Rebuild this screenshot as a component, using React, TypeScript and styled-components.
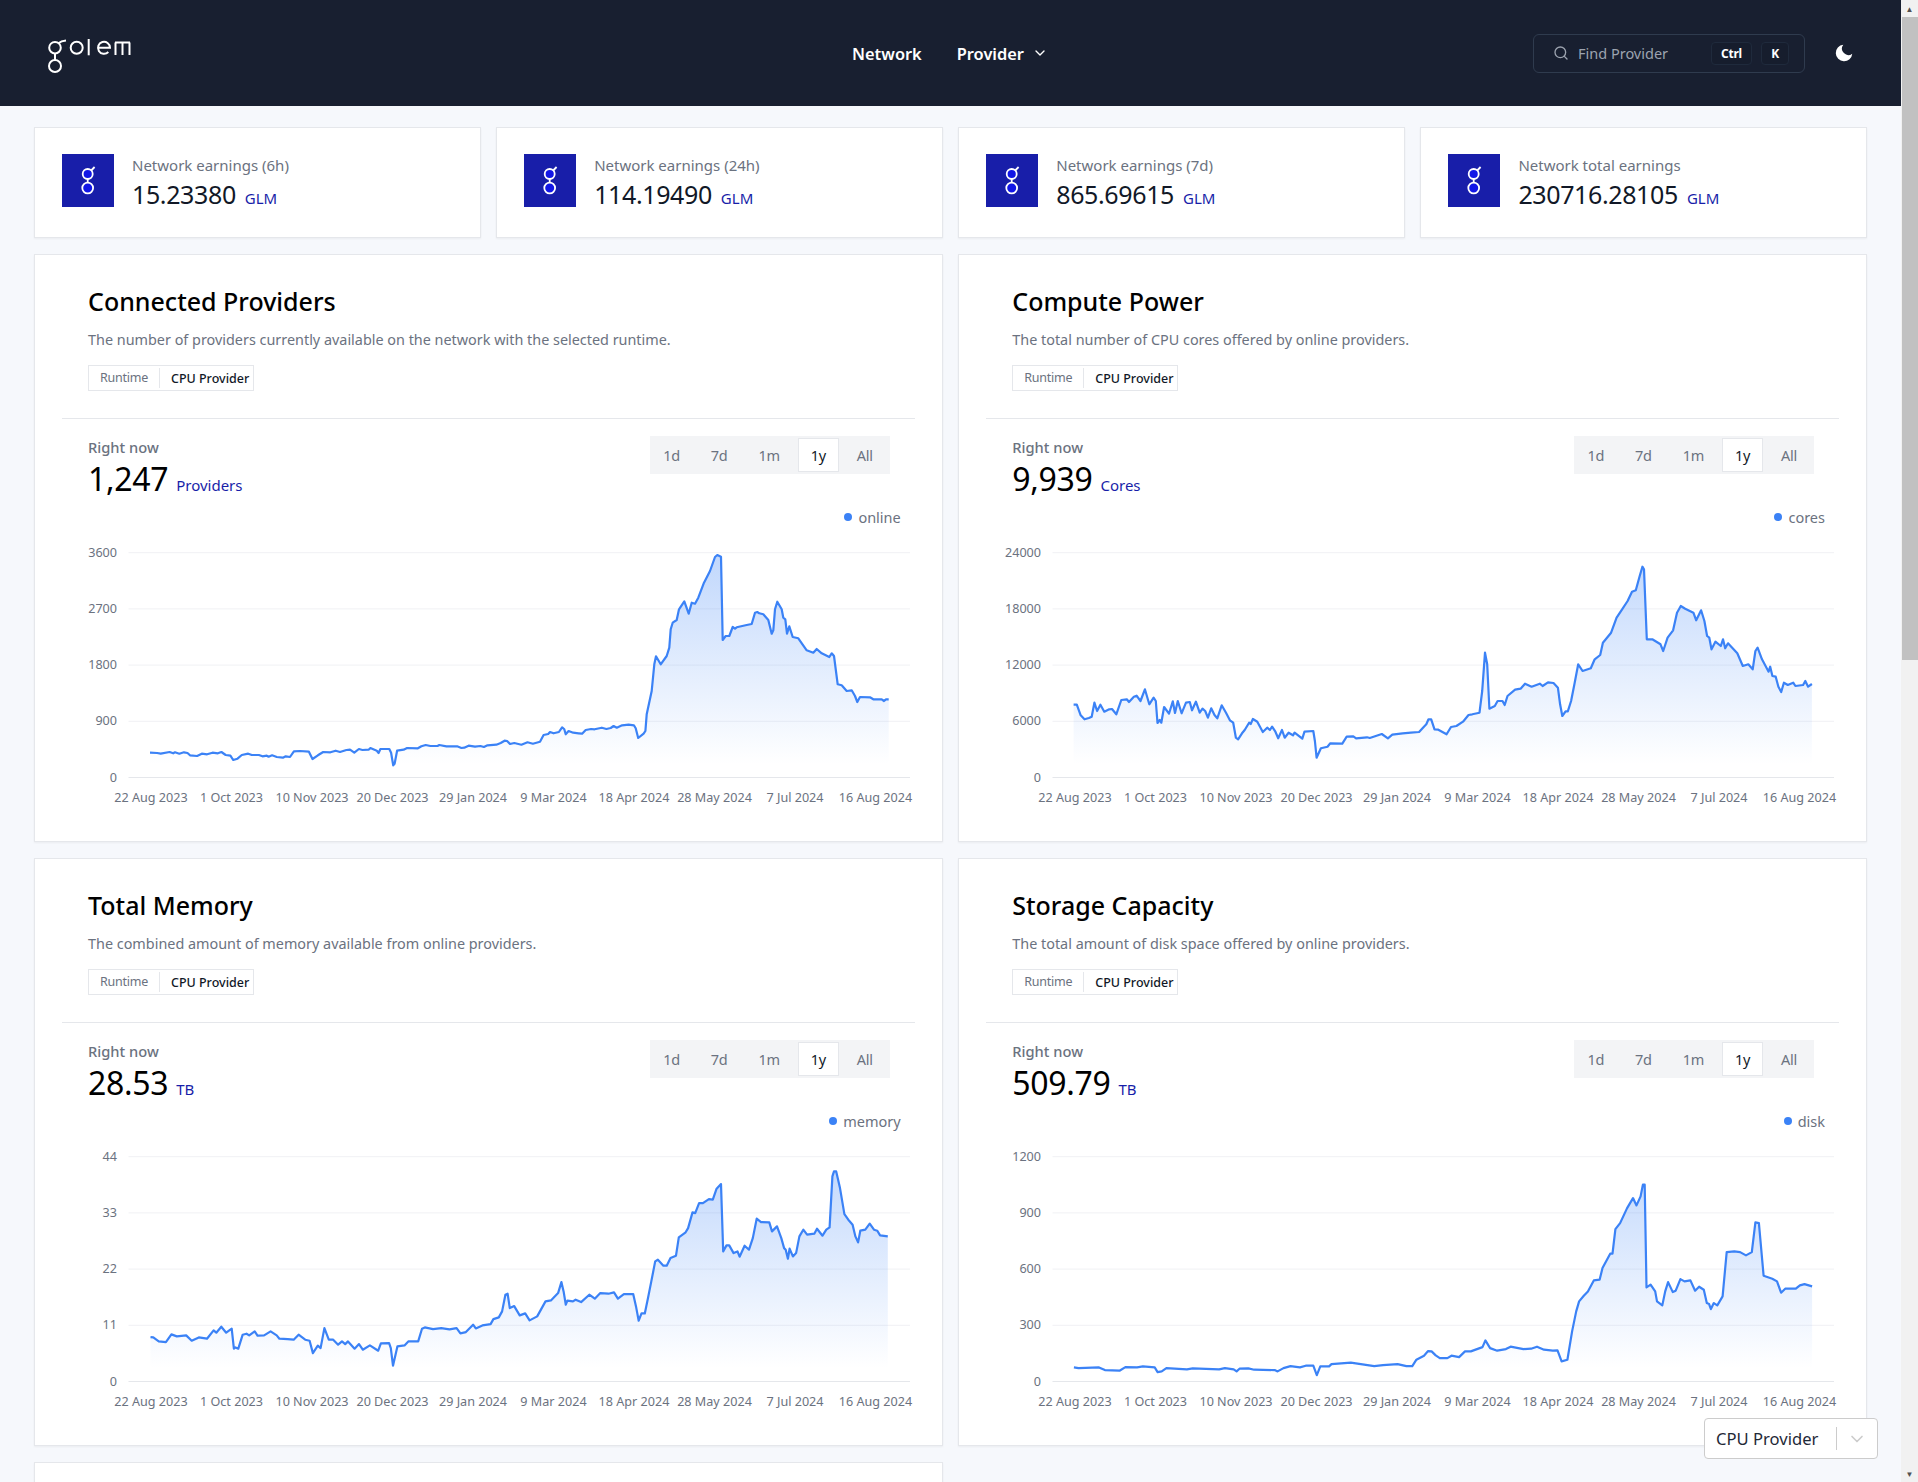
import { useMemo } from "react";
import styled, { createGlobalStyle } from "styled-components";
import { ChevronDown, Search } from "lucide-react";

const GOLEM_BLUE = "#181ea9";
const FONT = `"Noto Sans", "Open Sans", Arial, sans-serif`;

const GlobalStyle = createGlobalStyle`
  html, body {
    margin: 0;
    height: 100%;
    overflow: hidden;
  }
  body {
    font-family: ${FONT};
    background: #f6f8fc;
    color: #111827;
  }
  * { box-sizing: border-box; }
`;

/* ---- page frame ---- */

const Shell = styled.div`
  display: flex;
  height: 1482px;
  position: relative;
`;

const Viewport = styled.div`
  flex: 1;
  min-width: 0;
  overflow: hidden;
`;

const FakeScrollbar = styled.div`
  width: 17px;
  display: flex;
  flex-direction: column;
  background: #f1f1f1;
  color: #505050;
  font-size: 8px;
  line-height: 17px;
  text-align: center;
`;

const ScrollArrow = styled.div`
  height: 17px;
  flex: none;
`;

const ScrollThumb = styled.div`
  height: 643px;
  margin-left: 1px;
  background: #c1c1c1;
`;

const ScrollRest = styled.div`
  flex: 1;
`;

/* ---- header ---- */

const Header = styled.header`
  height: 106px;
  background: #181f30;
  display: grid;
  grid-template-columns: 1fr auto 1fr;
  align-items: center;
  padding: 0 46px 0 48px;
`;

const LogoSvg = styled.svg`
  display: block;
  margin-top: 8px;
`;

const Nav = styled.nav`
  display: flex;
  align-items: center;
  gap: 35px;
  margin-left: -3px;
`;

const NavLink = styled.a`
  display: flex;
  align-items: center;
  gap: 8px;
  color: #fff;
  font-size: 16.4px;
  font-weight: 600;
`;

const HeaderRight = styled.div`
  display: flex;
  align-items: center;
  justify-content: flex-end;
  gap: 28px;
`;

const SearchBox = styled.div`
  width: 272px;
  height: 39px;
  display: flex;
  align-items: center;
  border: 1px solid #2f3b4e;
  border-radius: 6px;
  padding: 0 15px 0 19px;
  color: #9ca3af;
  font-size: 14.5px;
`;

const SearchLabel = styled.span`
  margin-left: 9px;
  flex: 1;
`;

const Key = styled.kbd`
  height: 23px;
  display: inline-flex;
  align-items: center;
  justify-content: center;
  min-width: ${(p: { $w: number }) => p.$w}px;
  margin-left: 9px;
  border: 1px solid #1f2a3c;
  border-radius: 4px;
  background: #161d2d;
  color: #fff;
  font-family: ${FONT};
  font-size: 12px;
  font-weight: 700;
  letter-spacing: -0.02em;
`;

const MoonSvg = styled.svg`
  display: block;
  fill: #fff;
`;

/* ---- content ---- */

const Content = styled.main`
  padding: 21px 34px 0;
  display: flex;
  flex-direction: column;
  gap: 16px;
`;

const StatRow = styled.section`
  display: grid;
  grid-template-columns: repeat(4, minmax(0, 1fr));
  gap: 15.5px;
`;

const StatCard = styled.div`
  height: 111px;
  display: flex;
  align-items: center;
  gap: 18px;
  padding: 0 27px;
  background: #fff;
  border: 1px solid #e5e7eb;
  box-shadow: 0 1px 2px rgba(0, 0, 0, 0.05);
`;

const StatIcon = styled.div`
  width: 52px;
  height: 53px;
  flex: none;
  margin-top: -4px;
  display: flex;
  align-items: center;
  justify-content: center;
  background: ${GOLEM_BLUE};
`;

const StatText = styled.div`
  padding-top: 3px;
`;

const StatLabel = styled.div`
  font-size: 15px;
  line-height: 20px;
  color: #6b7280;
`;

const StatValue = styled.div`
  display: flex;
  align-items: baseline;
  gap: 9px;
  margin-top: 3px;
  font-size: 25px;
  line-height: 32px;
  letter-spacing: -0.015em;
  color: #111827;
`;

const Unit = styled.span`
  font-size: 15px;
  letter-spacing: 0;
  color: ${GOLEM_BLUE};
`;

const ChartGrid = styled.section`
  display: grid;
  grid-template-columns: repeat(2, minmax(0, 1fr));
  column-gap: 15.5px;
  row-gap: 16px;
`;

const Card = styled.article`
  min-height: 588px;
  padding: 0 27px;
  background: #fff;
  border: 1px solid #e5e7eb;
  box-shadow: 0 1px 2px rgba(0, 0, 0, 0.05);
`;

const CardHead = styled.div`
  padding: 30px 26px 27px;
  border-bottom: 1px solid #e5e7eb;
`;

const CardTitle = styled.h2`
  margin: 0;
  font-size: 25px;
  line-height: 32px;
  font-weight: 500;
  color: #000;
`;

const CardText = styled.p`
  margin: 13px 0 0;
  font-size: 14.4px;
  line-height: 20px;
  color: #6b7280;
`;

const Tag = styled.div`
  display: inline-flex;
  align-items: center;
  height: 26px;
  margin-top: 15px;
  padding: 0 4px 0 11px;
  border: 1px solid #e5e7eb;
  font-size: 12.5px;
`;

const TagKey = styled.span`
  color: #6b7280;
  padding-right: 11px;
  margin-right: 11px;
  line-height: 20px;
  letter-spacing: -0.02em;
  border-right: 1px solid #e5e7eb;
`;

const TagValue = styled.span`
  color: #111827;
  font-weight: 500;
`;

const ChartTop = styled.div`
  display: flex;
  justify-content: space-between;
  align-items: flex-start;
  padding: 17px 25px 0 26px;
  height: 79px;
`;

const NowLabel = styled.div`
  margin-top: 1px;
  font-size: 14.7px;
  line-height: 20px;
  font-weight: 500;
  color: #6b7280;
`;

const NowValue = styled.div`
  display: flex;
  align-items: baseline;
  gap: 8px;
  margin-top: 3px;
  font-size: 32px;
  line-height: 38px;
  letter-spacing: -0.01em;
  color: #000;
`;

const Toggle = styled.div`
  display: flex;
  gap: 7px;
  padding: 3px 5px 3px 1px;
  height: 38px;
  background: #f3f4f6;
`;

const ToggleItem = styled.span<{ $active?: boolean }>`
  display: flex;
  align-items: center;
  padding: 0 12px;
  font-size: 14.5px;
  letter-spacing: -0.02em;
  color: ${(p) => (p.$active ? "#111827" : "#6b7280")};
  background: ${(p) => (p.$active ? "#fff" : "transparent")};
  box-shadow: ${(p) => (p.$active ? "0 0 0 1px #e5e7eb" : "none")};
`;

const Legend = styled.div`
  display: flex;
  justify-content: flex-end;
  align-items: center;
  gap: 6px;
  height: 20px;
  margin-top: 9px;
  padding-right: 14px;
  font-size: 14.5px;
  color: #6b7280;
`;

const LegendDot = styled.i`
  width: 8px;
  height: 8px;
  border-radius: 50%;
  background: #3b82f6;
`;

const ChartSvg = styled.svg`
  display: block;
  margin-top: 4px;
  font-family: ${FONT};
  font-size: 12.6px;
  fill: #6b7280;
`;

const RuntimeSelect = styled.div`
  position: absolute;
  right: 40px;
  bottom: 23px;
  width: 174px;
  height: 41px;
  display: flex;
  align-items: center;
  background: #fff;
  border: 1px solid #ccc;
  border-radius: 4px;
  font-size: 16.6px;
  color: #1f2937;
`;

const SelectText = styled.span`
  flex: 1;
  padding-left: 11px;
`;

const SelectArrow = styled.span`
  display: flex;
  align-items: center;
  justify-content: center;
  width: 41px;
  height: 23px;
  border-left: 1px solid #ccc;
  color: #ccc;
`;

/* ---- chart data, traced by hand from the 1y view ---- */

type Pt = [number, number];

// each trace is given in its own sampling grid: x / sx + ox, y / 3 + oy
const conn1: Pt[] = [[140,665],[160,666],[170,668],[195,663],[205,667],[210,664],[222,668],[235,664],[245,666],[252,673],[272,675],[285,668],[300,670],[315,665],[330,667],[340,663],[352,672],[365,674],[373,687],[385,683],[397,672],[415,668],[425,672],[445,672],[455,676],[467,674],[472,677],[482,673],[495,678],[512,680],[520,676],[532,678],[543,661],[560,660],[585,662],[595,684],[610,673],[625,663],[645,664],[660,659],[672,663],[690,657],[700,656],[712,665],[725,654],[735,657],[752,656],[757,651],[775,659],[780,666],[785,654],[810,654],[815,665],[821,703],[825,698],[832,659],[850,656],[860,651],[890,652],[900,646],[912,642],[925,645],[945,645],[950,642],[970,646],[1000,646],[1012,651],[1020,650],[1032,644],[1050,647],[1065,645],[1075,648],[1085,643],[1110,641],[1122,636],[1133,629],[1140,630],[1148,639],[1160,636],[1180,641],[1197,634],[1212,638],[1232,632],[1242,612],[1255,609],[1260,603],[1270,607],[1285,603],[1294,589],[1300,595],[1304,610],[1312,600],[1325,605],[1340,607],[1350,608],[1360,597],[1375,594],[1385,595],[1405,590],[1418,594],[1430,591],[1438,585],[1447,590],[1462,583],[1480,581],[1495,583],[1500,592],[1507,621],[1522,608],[1527,600]];
const conn2: Pt[] = [[440,880],[455,810],[463,730],[468,706],[482,730],[500,705],[508,680],[512,625],[518,605],[530,597],[537,565],[553,541],[566,578],[575,545],[585,548],[595,530],[612,485],[630,450],[645,408],[652,402],[663,407],[668,657],[677,645],[688,645],[698,618],[705,623],[710,619],[740,612],[755,609],[765,575],[772,573],[778,577],[790,580],[805,597],[815,638],[820,628],[825,565],[832,542],[845,565],[850,590],[856,595],[861,638],[868,616],[878,648],[895,652],[920,688],[940,695],[950,684],[965,697],[988,708],[995,697],[1002,705],[1013,790],[1025,793],[1040,810],[1055,808],[1065,825],[1072,843],[1080,828],[1110,829],[1120,835],[1145,835],[1152,840],[1158,835],[1166,835]];
const cores: Pt[] = [[135,551],[141,551],[148,583],[155,595],[163,591],[168,587],[173,545],[178,570],[184,551],[191,572],[200,565],[205,564],[213,580],[222,537],[232,535],[236,543],[245,527],[250,524],[257,540],[265,505],[273,550],[281,530],[285,540],[288,606],[292,597],[295,605],[300,558],[309,578],[316,541],[320,576],[325,540],[332,577],[340,545],[347,543],[351,568],[358,542],[365,575],[370,563],[375,570],[380,590],[386,562],[392,582],[397,592],[405,553],[413,575],[420,598],[426,605],[431,650],[435,655],[442,637],[447,627],[455,605],[458,609],[462,594],[470,602],[480,633],[488,620],[493,627],[497,617],[503,632],[508,652],[515,627],[520,650],[527,635],[535,643],[538,635],[552,653],[556,632],[572,630],[575,660],[578,710],[586,682],[598,677],[603,667],[625,668],[633,647],[645,646],[650,652],[670,649],[675,651],[697,639],[708,652],[716,641],[735,637],[750,635],[765,633],[772,620],[778,610],[782,595],[787,595],[793,625],[800,626],[815,640],[823,618],[833,615],[845,602],[855,582],[862,580],[875,575],[880,510],[885,395],[889,430],[893,563],[903,555],[908,540],[917,540],[921,552],[926,525],[940,506],[950,503],[958,488],[970,497],[985,488],[990,495],[1000,484],[1010,486],[1018,500],[1022,550],[1026,585],[1032,571],[1036,571],[1042,540],[1048,490],[1055,430],[1063,450],[1078,442],[1085,415],[1095,402],[1100,365],[1115,335],[1125,290],[1135,265],[1145,240],[1153,212],[1160,208],[1167,165],[1172,137],[1175,145],[1180,355],[1190,355],[1205,370],[1210,390],[1218,350],[1228,328],[1235,275],[1242,255],[1250,263],[1265,275],[1270,298],[1279,268],[1285,300],[1290,345],[1294,350],[1298,385],[1305,362],[1315,375],[1319,355],[1323,382],[1328,367],[1345,397],[1355,435],[1365,430],[1373,445],[1378,390],[1382,380],[1390,415],[1402,452],[1405,437],[1409,465],[1415,467],[1420,497],[1425,513],[1430,485],[1437,492],[1447,485],[1451,495],[1465,492],[1469,480],[1474,497],[1481,489]];
const memory: Pt[] = [[165,617],[170,618],[180,630],[193,632],[203,609],[213,615],[230,612],[240,628],[253,618],[268,622],[280,597],[285,604],[294,586],[303,604],[313,592],[317,652],[320,648],[325,652],[333,610],[340,607],[345,612],[355,600],[360,613],[372,612],[384,600],[395,612],[400,622],[415,623],[426,625],[435,610],[447,625],[455,628],[461,665],[470,643],[475,650],[482,590],[490,625],[498,625],[507,640],[514,630],[520,638],[525,630],[537,652],[545,638],[552,655],[565,642],[580,658],[585,636],[600,635],[603,650],[607,703],[615,645],[628,642],[635,630],[653,630],[660,592],[665,588],[680,593],[695,590],[710,594],[723,590],[730,606],[740,602],[753,580],[758,591],[770,582],[785,578],[790,563],[800,558],[806,540],[812,490],[816,487],[820,530],[828,524],[838,552],[848,546],[856,567],[870,555],[885,510],[895,507],[908,485],[914,452],[918,480],[922,520],[925,508],[935,510],[940,505],[950,512],[965,490],[975,502],[985,485],[1000,487],[1010,483],[1017,502],[1028,488],[1045,488],[1050,525],[1055,568],[1060,546],[1066,546],[1072,500],[1078,450],[1085,390],[1090,385],[1100,403],[1106,403],[1113,380],[1123,373],[1128,318],[1140,304],[1145,290],[1153,243],[1158,245],[1165,215],[1172,215],[1183,203],[1190,205],[1197,172],[1205,158],[1209,360],[1215,342],[1220,342],[1228,365],[1235,360],[1239,376],[1248,343],[1256,355],[1263,320],[1270,262],[1278,272],[1293,273],[1298,300],[1307,285],[1315,320],[1320,350],[1323,355],[1327,382],[1330,352],[1336,375],[1342,365],[1348,315],[1355,295],[1362,310],[1375,307],[1380,292],[1390,313],[1397,295],[1403,288],[1408,135],[1411,120],[1415,120],[1422,170],[1430,248],[1437,265],[1445,280],[1450,315],[1455,333],[1459,298],[1468,295],[1476,277],[1484,295],[1490,298],[1495,312],[1509,315]];
const disk: Pt[] = [[127,708],[135,710],[170,708],[180,716],[205,718],[215,707],[235,708],[245,705],[265,708],[270,722],[277,720],[285,710],[320,714],[330,711],[375,714],[385,710],[400,714],[405,720],[410,712],[425,711],[435,715],[470,716],[475,720],[485,710],[497,704],[513,708],[523,703],[536,703],[542,731],[548,705],[563,705],[567,698],[600,694],[620,699],[640,704],[655,701],[680,698],[695,704],[705,704],[712,685],[725,673],[732,659],[738,660],[745,672],[752,680],[765,680],[772,673],[785,677],[795,660],[805,660],[825,647],[830,627],[838,650],[850,658],[865,653],[873,646],[895,653],[908,652],[918,646],[930,655],[945,658],[953,657],[960,690],[970,685],[978,600],[985,540],[990,510],[998,493],[1005,480],[1015,447],[1025,445],[1030,410],[1043,367],[1047,367],[1052,293],[1060,275],[1072,230],[1082,200],[1088,222],[1095,195],[1099,160],[1102,160],[1105,468],[1112,460],[1120,480],[1123,510],[1132,522],[1137,480],[1142,452],[1150,482],[1155,478],[1163,443],[1170,450],[1180,447],[1188,478],[1195,466],[1203,475],[1208,515],[1212,518],[1215,533],[1220,515],[1226,522],[1235,495],[1242,362],[1255,360],[1265,362],[1275,372],[1285,362],[1291,273],[1297,275],[1305,433],[1320,442],[1328,450],[1335,484],[1342,472],[1360,472],[1367,462],[1375,458],[1388,465]];

// converts a trace to svg coordinates (svg origin = 62,530 of the first card)
const toSvg = (pts: Pt[], sx: number, ox: number, oy: number): Pt[] =>
  pts.map(([x, y]) => [x / sx + ox - 62, y / 3 + oy - 530]);

const dates = [
  "22 Aug 2023", "1 Oct 2023", "10 Nov 2023", "20 Dec 2023", "29 Jan 2024",
  "9 Mar 2024", "18 Apr 2024", "28 May 2024", "7 Jul 2024", "16 Aug 2024",
];

interface ChartInfo {
  title: string;
  text: string;
  value: string;
  unit: string;
  legend: string;
  ticks: string[];
  series: Pt[];
}

const charts: ChartInfo[] = [
  {
    title: "Connected Providers",
    text: "The number of providers currently available on the network with the selected runtime.",
    value: "1,247",
    unit: "Providers",
    legend: "online",
    ticks: ["3600", "2700", "1800", "900", "0"],
    series: [...toSvg(conn1, 2.8, 100, 530), ...toSvg(conn2, 3, 500, 420)],
  },
  {
    title: "Compute Power",
    text: "The total number of CPU cores offered by online providers.",
    value: "9,939",
    unit: "Cores",
    legend: "cores",
    ticks: ["24000", "18000", "12000", "6000", "0"],
    series: toSvg(cores, 1.823, 75.5, 520),
  },
  {
    title: "Total Memory",
    text: "The combined amount of memory available from online providers.",
    value: "28.53",
    unit: "TB",
    legend: "memory",
    ticks: ["44", "33", "22", "11", "0"],
    series: toSvg(memory, 1.823, 60, 526.4),
  },
  {
    title: "Storage Capacity",
    text: "The total amount of disk space offered by online providers.",
    value: "509.79",
    unit: "TB",
    legend: "disk",
    ticks: ["1200", "900", "600", "300", "0"],
    series: toSvg(disk, 1.708, 75.5, 526.4),
  },
];

const earnings = [
  { label: "Network earnings (6h)", value: "15.23380" },
  { label: "Network earnings (24h)", value: "114.19490" },
  { label: "Network earnings (7d)", value: "865.69615" },
  { label: "Network total earnings", value: "230716.28105" },
];

const GRID_TOP = 21.7;
const GRID_STEP = 56.2;
const GRID_LEFT = 66.5;
const GRID_RIGHT = 848;

function AreaChart({ id, ticks, series }: { id: string; ticks: string[]; series: Pt[] }) {
  const base = GRID_TOP + GRID_STEP * 4;
  const line = useMemo(
    () => series.map(([x, y], i) => `${i ? "L" : "M"}${x.toFixed(1)} ${y.toFixed(1)}`).join(" "),
    [series],
  );
  const first = series[0][0].toFixed(1);
  const last = series[series.length - 1][0].toFixed(1);

  return (
    <ChartSvg width={852} height={290} viewBox="0 0 852 290">
      <defs>
        <linearGradient id={id} gradientUnits="userSpaceOnUse" x1="0" y1={GRID_TOP} x2="0" y2={base}>
          <stop offset="0" stopColor="#3b82f6" stopOpacity={0.32} />
          <stop offset="0.94" stopColor="#3b82f6" stopOpacity={0} />
        </linearGradient>
      </defs>
      {ticks.map((tick, i) => {
        const y = GRID_TOP + GRID_STEP * i;
        return (
          <g key={tick}>
            <line x1={GRID_LEFT} x2={GRID_RIGHT} y1={y} y2={y} stroke={i === 4 ? "#e5e7eb" : "#f0f1f4"} strokeWidth={1} />
            <text x={55} y={y + 4} textAnchor="end">{tick}</text>
          </g>
        );
      })}
      {dates.map((d, i) => (
        <text key={d} x={89 + i * 80.5} y={271} textAnchor="middle">{d}</text>
      ))}
      <path d={`${line} L${last} ${base} L${first} ${base} Z`} fill={`url(#${id})`} />
      <path d={line} fill="none" stroke="#3b82f6" strokeWidth={2.2} strokeLinejoin="round" />
    </ChartSvg>
  );
}

function GolemMark() {
  return (
    <svg width="20" height="32" viewBox="0 0 20 32" fill="#1216e6" stroke="#fff" strokeWidth="1.8">
      <circle cx="9.7" cy="9" r="5" />
      <circle cx="9.7" cy="23" r="5.4" />
      <path d="M9.7 14 V17.6 M13.2 5.5 L16.6 2" fill="none" />
    </svg>
  );
}

// golem wordmark, built from plain strokes
function Logo() {
  return (
    <LogoSvg width="86" height="36" viewBox="0 0 86 36" fill="none" stroke="#fff" strokeWidth="2">
      <title>golem</title>
      <circle cx="7" cy="8.7" r="5.8" />
      <circle cx="7" cy="27" r="6" />
      <path d="M7 14.5 V21 M10.5 4.2 Q13 2 18 1.6" />
      <circle cx="28.7" cy="8.7" r="6" />
      <path d="M40.7 0 V16.3" />
      <path d="M50 8.7 H62 A6 6 0 1 0 60.3 13" />
      <path d="M67 3.5 H82 M67.5 3.5 V16 M74.5 3.5 V16 M81.5 3.5 V16" />
    </LogoSvg>
  );
}

function ChartCard({ chart, index }: { chart: ChartInfo; index: number }) {
  return (
    <Card>
      <CardHead>
        <CardTitle>{chart.title}</CardTitle>
        <CardText>{chart.text}</CardText>
        <Tag>
          <TagKey>Runtime</TagKey>
          <TagValue>CPU Provider</TagValue>
        </Tag>
      </CardHead>
      <ChartTop>
        <div>
          <NowLabel>Right now</NowLabel>
          <NowValue>
            {chart.value}
            <Unit>{chart.unit}</Unit>
          </NowValue>
        </div>
        <Toggle>
          {["1d", "7d", "1m", "1y", "All"].map((r) => (
            <ToggleItem key={r} $active={r === "1y"}>{r}</ToggleItem>
          ))}
        </Toggle>
      </ChartTop>
      <Legend>
        <LegendDot />
        {chart.legend}
      </Legend>
      <AreaChart id={`area-${index}`} ticks={chart.ticks} series={chart.series} />
    </Card>
  );
}

export default function App() {
  return (
    <>
      <GlobalStyle />
      <Shell>
        <Viewport>
          <Header>
            <Logo />
            <Nav>
              <NavLink>Network</NavLink>
              <NavLink>
                Provider
                <ChevronDown size={16} strokeWidth={2} />
              </NavLink>
            </Nav>
            <HeaderRight>
              <SearchBox>
                <Search size={16} strokeWidth={2} />
                <SearchLabel>Find Provider</SearchLabel>
                <Key $w={41}>Ctrl</Key>
                <Key $w={28}>K</Key>
              </SearchBox>
              <MoonSvg width="22" height="22" viewBox="0 0 24 24">
                <path d="M21 12.79A9 9 0 1 1 11.21 3 7 7 0 0 0 21 12.79z" />
              </MoonSvg>
            </HeaderRight>
          </Header>
          <Content>
            <StatRow>
              {earnings.map((e) => (
                <StatCard key={e.label}>
                  <StatIcon>
                    <GolemMark />
                  </StatIcon>
                  <StatText>
                    <StatLabel>{e.label}</StatLabel>
                    <StatValue>
                      {e.value}
                      <Unit>GLM</Unit>
                    </StatValue>
                  </StatText>
                </StatCard>
              ))}
            </StatRow>
            <ChartGrid>
              {charts.map((c, i) => (
                <ChartCard key={c.title} chart={c} index={i} />
              ))}
              <Card />
            </ChartGrid>
          </Content>
        </Viewport>
        <FakeScrollbar>
          <ScrollArrow>▲</ScrollArrow>
          <ScrollThumb />
          <ScrollRest />
          <ScrollArrow>▼</ScrollArrow>
        </FakeScrollbar>
        <RuntimeSelect>
          <SelectText>CPU Provider</SelectText>
          <SelectArrow>
            <ChevronDown size={20} strokeWidth={2} />
          </SelectArrow>
        </RuntimeSelect>
      </Shell>
    </>
  );
}
